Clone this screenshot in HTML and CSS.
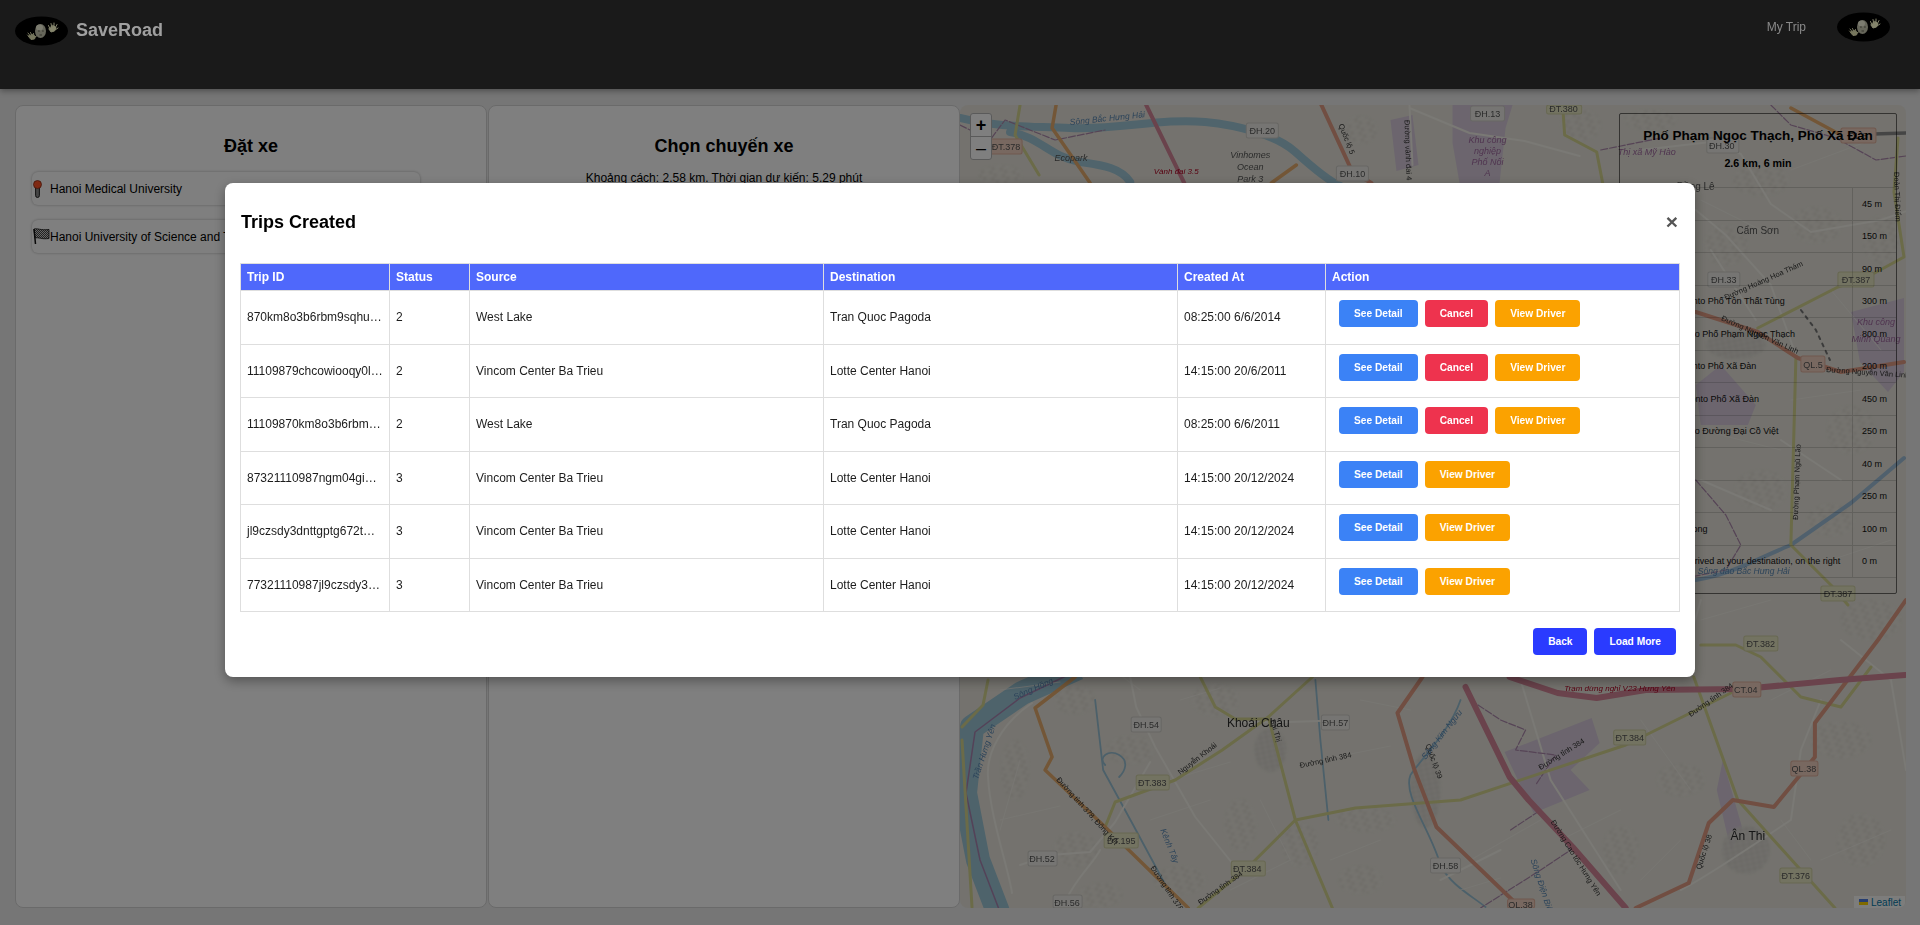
FILE: index.html
```html
<!DOCTYPE html>
<html lang="vi">
<head>
<meta charset="utf-8">
<title>SaveRoad</title>
<link rel="stylesheet" href="styles.css">
</head>
<body>
<svg class="defs" width="0" height="0" aria-hidden="true">
  <symbol id="logo" viewBox="0 0 53 30">
    <ellipse cx="26.5" cy="15" rx="26.5" ry="14.5" fill="#000"/>
    <ellipse cx="25.500" cy="15" rx="5.500" ry="7" fill="#66665a"/>
    <ellipse cx="24.500" cy="11.500" rx="3.500" ry="3" fill="#7c7c70"/>
    <path d="M23 15h1.800M27 15h1.800M24.500 19h2.500" stroke="#34342c" stroke-width="1.200"/>
    <path d="M13.500 20.500l2.500 3 3.500-.5 1-2.500-3-2zM12.500 19l2 2M13 17l2.500 3M15.500 16.500l1.500 3M18.500 17.500l.4 2.500M21.500 20l-2 1" fill="#77775e" stroke="#77775e" stroke-width="1" stroke-linecap="round"/>
    <path d="M34 13l2 3 3.500-1 1.500-3.500-3-2zM33.500 9.500l1.800 4M36 7.500l.9 4.500M39 7l0 5M42 8.500l-2 4M43 12l-3 2" fill="#85856c" stroke="#85856c" stroke-width="1" stroke-linecap="round"/>
  </symbol>
  <defs>
    <pattern id="vill" width="11" height="7" patternUnits="userSpaceOnUse" patternTransform="rotate(-18)">
      <rect width="11" height="7" fill="#e6e2d9"/>
      <path d="M0 1.500h7M3 5h7" stroke="#f6f5ef" stroke-width="1"/>
      <rect x="8" y="0" width="2" height="2" fill="#d2cfc6"/>
      <rect x="0.500" y="4" width="2" height="2" fill="#d2cfc6"/>
    </pattern>
    <pattern id="town" width="6" height="5" patternUnits="userSpaceOnUse" patternTransform="rotate(-12)">
      <rect width="6" height="5" fill="#d6d3cb"/>
      <path d="M0 1.500h6M2 0v5" stroke="#e8e7e1" stroke-width=".8"/>
    </pattern>
  </defs>
</svg>

<header class="topbar">
  <div class="brand">
    <svg class="logo" viewBox="0 0 53 30"><use href="#logo"/></svg>
    <span class="brand-name">SaveRoad</span>
  </div>
  <nav class="topnav">
    <a class="topnav-link">My Trip</a>
    <svg class="avatar" viewBox="0 0 53 30"><use href="#logo"/></svg>
  </nav>
</header>

<main class="workspace">
  <section class="panel">
    <h2 class="panel-title">Đặt xe</h2>
    <div class="place">
      <svg class="pin" viewBox="0 0 9 18"><rect x="2.600" y="5" width="3.800" height="12.500" rx="1.900" fill="#8a8a8a" stroke="#111" stroke-width=".9"/><circle cx="4.500" cy="4.500" r="4" fill="#ff5226" stroke="#7a2410" stroke-width=".7"/></svg>
      <span class="place-text">Hanoi Medical University</span>
    </div>
    <div class="place">
      <svg class="flag" viewBox="0 0 17 17">
        <defs><pattern id="check" width="2" height="2" patternUnits="userSpaceOnUse"><rect width="2" height="2" fill="#cfcfcf"/><rect width="1" height="1" fill="#444"/><rect x="1" y="1" width="1" height="1" fill="#444"/></pattern></defs>
        <path d="M1 1c4-1 6 1.500 15 .5v9c-8 1-10-1.500-14-.5z" fill="url(#check)" stroke="#111" stroke-width=".8"/>
        <path d="M1 1l1.500 15" stroke="#111" stroke-width="1.500"/>
      </svg>
      <span class="place-text">Hanoi University of Science and Technology</span>
    </div>
  </section>

  <section class="panel">
    <h2 class="panel-title">Chọn chuyến xe</h2>
    <p class="panel-note">Khoảng cách: 2.58 km. Thời gian dự kiến: 5.29 phút</p>
  </section>

  <section class="map">
    <svg class="map-art" viewBox="960 105 945 803" preserveAspectRatio="none">
      <!-- land use -->
      <path class="landuse" d="M1452 105h60l-7 23-6 55h-40l-7-40z"/>
      <path class="landuse" d="M1504 752l87-34 8 25-29 27 19 20-56 23z"/>
      <path class="landuse" d="M1850 312l53-14v74l-16 20-28-30z"/>
      <path class="landuse" d="M1695 385l25-20 35 40-8 20h-47z"/>
      <path class="landuse" d="M1722 760l20 70-12 20-14-60z"/>
      <path class="landuse" d="M1390 120l22-5 6 50-22 6z"/>
      <!-- villages -->
      <g class="villages">
        <ellipse cx="1015" cy="770" rx="14" ry="30"/>
        <ellipse cx="1075" cy="700" rx="20" ry="14"/>
        <ellipse cx="1075" cy="850" rx="22" ry="18"/>
        <ellipse cx="1130" cy="750" rx="24" ry="14"/>
        <ellipse cx="1100" cy="895" rx="22" ry="12"/>
        <ellipse cx="1215" cy="700" rx="24" ry="16"/>
        <ellipse cx="1300" cy="845" rx="18" ry="22"/>
        <ellipse cx="1240" cy="825" rx="16" ry="26"/>
        <ellipse cx="1180" cy="880" rx="26" ry="14"/>
        <ellipse cx="1365" cy="820" rx="30" ry="12"/>
        <ellipse cx="1360" cy="880" rx="22" ry="14"/>
        <ellipse cx="1620" cy="850" rx="18" ry="24"/>
        <ellipse cx="1680" cy="780" rx="24" ry="16"/>
        <ellipse cx="1840" cy="740" rx="30" ry="18"/>
        <ellipse cx="1860" cy="840" rx="24" ry="26"/>
        <ellipse cx="1870" cy="620" rx="30" ry="20"/>
        <ellipse cx="1760" cy="180" rx="28" ry="16"/>
        <ellipse cx="1815" cy="225" rx="26" ry="18"/>
        <ellipse cx="1725" cy="245" rx="22" ry="20"/>
        <ellipse cx="1850" cy="430" rx="24" ry="24"/>
        <ellipse cx="1760" cy="490" rx="26" ry="20"/>
        <ellipse cx="1830" cy="520" rx="24" ry="16"/>
        <ellipse cx="1880" cy="240" rx="18" ry="24"/>
        <ellipse cx="1580" cy="125" rx="20" ry="16"/>
        <ellipse cx="1650" cy="120" rx="26" ry="10"/>
        <ellipse cx="1360" cy="130" rx="16" ry="14"/>
        <ellipse cx="1000" cy="175" rx="22" ry="10"/>
      </g>
      <g class="towns">
        <ellipse cx="1270" cy="750" rx="16" ry="22"/>
        <ellipse cx="1425" cy="790" rx="15" ry="38"/>
        <ellipse cx="1745" cy="850" rx="24" ry="24"/>
        <ellipse cx="1735" cy="345" rx="30" ry="14"/>
      </g>
      <!-- water -->
      <path class="river-big" d="M1078 668L1022 693 972 727 965 793 978 860 998 912"/>
      <path class="river-line" d="M1070 674L1020 698 975 732 966 793 980 860 1000 912"/>
      <path class="river-mid" d="M960 118c40 10 70 8 110 10 50 2 90-10 135-6 30 3 70 12 90 30 20 18 35 30 45 34"/>
      <path class="river-mid" d="M1010 132c30 5 40 25 70 30 20 3 40 5 50 20"/>
      <path class="river-thin" d="M1790 545l60-42 53-45"/>
      <path class="river-thin" d="M1790 545c-30 12-60 30-95 35"/>
      <path class="canal" d="M1095 700l8 70 30 55 35 65M1315 680l5 60 8 80"/>
      <path class="canal" d="M1460 700c-10 30-40 60-50 75-8 20 20 55 30 90 10 20 30 30 45 42"/>
      <path class="canal" d="M1105 765c-8-8 4-16 14-10s6 16 0 22"/>
      <!-- field tracks -->
      <path class="track" d="M1000 690l60-8M1000 820l60-14M1100 660l40 30M1180 700l40-12M1170 780l60-18M1150 820l60-20M1260 800l30 60M1320 760l70-14M1330 860l50-20M1360 700l50 10M1470 860l70-40M1560 840l60-30M1640 720l50 70M1640 880l40-40M1770 700l60-30M1780 820l30 40M1820 860l70-30M1830 560l60-20M1700 620l70-20M1700 430l80 20M1790 400l70-10M1700 200l60 30M1790 170l80-30M1830 290l50 60M1460 890l40-12M1020 760l-20 70M1230 890l60-30"/>
      <path class="minor" d="M1130 677l6 30 19 40 40 70 40 50M1032 703c-30 20-46 50-44 74 2 40 20 90 24 116M1150 762l-35 60-25 30-40 3-30 10M1100 850c-8 15-24 28-34 50"/>
      <path class="minor" d="M1230 722h60l55-2M1409 105l3 60M1409 108l60 25 55 8 55 15M1640 150l70-8 30 12 30 50 40 28 70-12 40-14M1695 210l30 25 45 50 25 70"/>
      <path class="minor" d="M1840 640l50 40 15 90M1700 600l-20 70M1820 700l-20 50-10 70-30 20M1760 840c-30 20-60 40-80 50"/>
      <path class="minor" d="M1520 680l30 100 70 110M1700 480l70 30M1710 250l45 70M1780 440l60 40M1440 880l60-30"/>
      <!-- boundary -->
      <path class="bound" d="M1770 105l20 20 45 13 40 22 30-4M1600 150l60-12M1470 700l30 20 25 10-10 20 40 5-20 30M1510 830l30-20 30 40-30 20-60 38M1695 480l30 35 15 30-15 25-40 8M960 125l30 15 15-20 50 20 50-10"/>
      <path class="rail" d="M1800 310l15 20 14 30"/>
      <!-- secondary roads -->
      <path class="yellow" d="M1562 105l2 30 32 17 6 31"/>
      <path class="yellow" d="M1312 677l-44 40 27 103 37 88"/>
      <path class="yellow" d="M1268 717l-46 33-47 30-60 22-10 25"/>
      <path class="yellow" d="M1198 908l50-41 47-47 60-12 105-8 165-55 105-52"/>
      <path class="yellow" d="M1200 677l15 30 20 12 33 0"/>
      <path class="yellow" d="M988 680l-5 25-21 22M962 740l10 167M1693 677l44 123 97 108"/>
      <path class="yellow" d="M1897 138l-4 54 10 65-33 18-33 12-80 41M1795 358l-5 187 40 40 17 20"/>
      <path class="yellow" d="M1700 645l35 0 25 12 40 40 40 10 30-40"/>
      <path class="yellow" d="M1020 105l-5 30 24 40"/>
      <!-- trunk roads -->
      <path class="orange" d="M1075 677l-40 31 17 49-7 13 60 57 83 81"/>
      <path class="orange" d="M1056 105l-4 23 38 55M1296 165l-25 18"/>
      <path class="orange" d="M1790 108l50 27"/>
      <path class="steel" d="M1840 135l65-2"/>
      <path class="salmon" d="M1422 677l-25 36 17 57 22 57 83 80"/>
      <path class="salmon" d="M1635 908l53-25 20-60 24-23 41 7 41-50v-34l63-83 28-40"/>
      <path class="salmon" d="M1695 312l62 20 40 26 43 14 63-10"/>
      <path class="salmon" d="M1321 105l31 67 19 11"/>
      <path class="pink" d="M1509 677l48 16 39 5 49-8 97-1 97-9 65-5"/>
      <path class="pink" d="M1465 687l44 90 19 23 44 47 53 61"/>
      <path class="pink pink-thin" d="M1146 105l38 78"/>
      <!-- shields -->
      <g class="sh"><rect x="1470" y="106" width="34" height="15"/><text x="1487" y="117">ĐH.13</text></g>
      <g class="sh sh-y"><rect x="1546" y="105" width="35" height="9"/><text x="1563" y="112">ĐT.380</text></g>
      <g class="sh"><rect x="1246" y="123" width="32" height="15"/><text x="1262" y="134">ĐH.20</text></g>
      <g class="sh"><rect x="1336" y="166" width="32" height="15"/><text x="1352" y="177">ĐH.10</text></g>
      <g class="sh sh-o"><rect x="990" y="139" width="32" height="15"/><text x="1006" y="150">ĐT.378</text></g>
      <g class="sh"><rect x="1706" y="138" width="32" height="15"/><text x="1721" y="149">ĐH.30</text></g>
      <g class="sh sh-o"><rect x="1840" y="128" width="35" height="15"/><text x="1857" y="139">QL.5</text></g>
      <g class="sh"><rect x="1707" y="272" width="32" height="15"/><text x="1723" y="283">ĐH.33</text></g>
      <g class="sh sh-y"><rect x="1837" y="272" width="36" height="15"/><text x="1855" y="283">ĐT.387</text></g>
      <g class="sh sh-o"><rect x="1800" y="356" width="24" height="16"/><text x="1812" y="368">QL.5</text></g>
      <g class="sh sh-y"><rect x="1820" y="586" width="34" height="15"/><text x="1837" y="597">ĐT.387</text></g>
      <g class="sh sh-y"><rect x="1743" y="636" width="34" height="15"/><text x="1760" y="647">ĐT.382</text></g>
      <g class="sh sh-o"><rect x="1732" y="682" width="28" height="15"/><text x="1745" y="693">CT.04</text></g>
      <g class="sh sh-y"><rect x="1613" y="730" width="32" height="15"/><text x="1629" y="741">ĐT.384</text></g>
      <g class="sh sh-o"><rect x="1790" y="761" width="27" height="15"/><text x="1803" y="772">QL.38</text></g>
      <g class="sh sh-y"><rect x="1779" y="868" width="32" height="15"/><text x="1795" y="879">ĐT.376</text></g>
      <g class="sh"><rect x="1430" y="858" width="30" height="15"/><text x="1445" y="869">ĐH.58</text></g>
      <g class="sh"><rect x="1321" y="715" width="28" height="15"/><text x="1335" y="726">ĐH.57</text></g>
      <g class="sh sh-y"><rect x="1136" y="775" width="33" height="15"/><text x="1152" y="786">ĐT.383</text></g>
      <g class="sh sh-y"><rect x="1104" y="833" width="34" height="15"/><text x="1121" y="844">ĐT.195</text></g>
      <g class="sh"><rect x="1131" y="717" width="30" height="15"/><text x="1146" y="728">ĐH.54</text></g>
      <g class="sh"><rect x="1028" y="851" width="29" height="15"/><text x="1042" y="862">ĐH.52</text></g>
      <g class="sh"><rect x="1053" y="895" width="29" height="13"/><text x="1067" y="906">ĐH.56</text></g>
      <g class="sh sh-y"><rect x="1231" y="861" width="34" height="15"/><text x="1247" y="872">ĐT.384</text></g>
      <g class="sh sh-o"><rect x="1507" y="899" width="27" height="9"/><text x="1520" y="908">QL.38</text></g>
      <!-- labels -->
      <text class="place-label" x="1258" y="727">Khoái Châu</text>
      <text class="place-label" x="1747" y="840">Ân Thi</text>
      <text class="small-label" x="1757" y="234">Cẩm Sơn</text>
      <text class="small-label" x="1695" y="190">Đồng Lê</text>
      <text class="italic-label" x="1071" y="161">Ecopark</text>
      <text class="italic-label" x="1250" y="158">Vinhomes</text>
      <text class="italic-label" x="1250" y="170">Ocean</text>
      <text class="italic-label" x="1250" y="182">Park 3</text>
      <text class="purple-label" x="1487" y="143">Khu công</text>
      <text class="purple-label" x="1487" y="154">nghiệp</text>
      <text class="purple-label" x="1487" y="165">Phố Nối</text>
      <text class="purple-label" x="1487" y="176">A</text>
      <text class="purple-label" x="1646" y="155">Thị xã Mỹ Hào</text>
      <text class="purple-label" x="1875" y="325">Khu công</text>
      <text class="purple-label" x="1875" y="342">Minh Quang</text>
      <text class="red-label" x="1176" y="174">Vành đai 3.5</text>
      <text class="red-label" x="1619" y="691">Trạm dừng nghỉ V23 Hưng Yên</text>
      <text class="road-label" transform="translate(1338 125) rotate(68)">Quốc lộ 5</text>
      <text class="road-label" transform="translate(1404 120) rotate(88)">Đường vành đai 4 Hà Nội</text>
      <text class="road-label" transform="translate(1300 768) rotate(-12)">Đường tỉnh 384</text>
      <text class="road-label" transform="translate(1540 770) rotate(-32)">Đường tỉnh 384</text>
      <text class="road-label" transform="translate(1690 717) rotate(-35)">Đường tỉnh 384</text>
      <text class="road-label" transform="translate(1180 775) rotate(-38)">Nguyễn Khoái</text>
      <text class="road-label" transform="translate(1270 720) rotate(74)">Sài Thị</text>
      <text class="road-label" transform="translate(1056 780) rotate(48)">Đường tỉnh 378, Đông Kết</text>
      <text class="road-label" transform="translate(1150 868) rotate(56)">Đường tỉnh 378, Liêu</text>
      <text class="road-label" transform="translate(1200 905) rotate(-35)">Đường tỉnh 384</text>
      <text class="road-label" transform="translate(1550 822) rotate(58)">Đường Cao tốc Hưng Yên</text>
      <text class="road-label" transform="translate(1425 745) rotate(70)">Quốc lộ 39</text>
      <text class="road-label" transform="translate(1700 870) rotate(-72)">Quốc lộ 38</text>
      <text class="road-label" transform="translate(1725 300) rotate(-24)">Đường Hoàng Hoa Thám</text>
      <text class="road-label" transform="translate(1720 320) rotate(24)">Đường Nguyễn Văn Linh</text>
      <text class="road-label" transform="translate(1825 372) rotate(4)">Đường Nguyễn Văn Linh</text>
      <text class="road-label" transform="translate(1797 520) rotate(-88)">Đường Phạm Ngũ Lão</text>
      <text class="road-label" transform="translate(1893 172) rotate(88)">Đoàn Thị Điểm</text>
      <text class="water-label" transform="translate(1015 700) rotate(-24)">Sông Hồng</text>
      <text class="water-label" transform="translate(978 780) rotate(-72)">Trần Hưng Yên</text>
      <text class="water-label" transform="translate(1160 830) rotate(68)">Kênh Tây</text>
      <text class="water-label" transform="translate(1425 760) rotate(-52)">Sông Kim Ngưu</text>
      <text class="water-label" transform="translate(1530 860) rotate(72)">Sông Điện Biên</text>
      <text class="water-label" x="1697" y="574">Sông đào Bắc Hưng Hải</text>
      <text class="water-label" transform="translate(1070 125) rotate(-6)">Sông Bắc Hưng Hải</text>
    </svg>

    <div class="zoom-bar">
      <span class="zoom-btn">+</span>
      <span class="zoom-btn">–</span>
    </div>

    <aside class="route">
      <h3 class="route-name">Phố Phạm Ngọc Thạch, Phố Xã Đàn</h3>
      <p class="route-sum">2.6 km, 6 min</p>
      <ol class="steps">
        <li class="step"><span>Head south</span><span>45 m</span></li>
        <li class="step"><span>Turn left</span><span>150 m</span></li>
        <li class="step"><span>Turn right</span><span>90 m</span></li>
        <li class="step"><span>Turn right onto Phố Tôn Thất Tùng</span><span>300 m</span></li>
        <li class="step"><span>Turn left onto Phố Phạm Ngọc Thạch</span><span>800 m</span></li>
        <li class="step"><span>Turn right onto Phố Xã Đàn</span><span>200 m</span></li>
        <li class="step"><span>Keep right onto Phố Xã Đàn</span><span>450 m</span></li>
        <li class="step"><span>Turn left onto Đường Đại Cồ Việt</span><span>250 m</span></li>
        <li class="step"><span>Turn left</span><span>40 m</span></li>
        <li class="step"><span>Turn left</span><span>250 m</span></li>
        <li class="step"><span>Continue along</span><span>100 m</span></li>
        <li class="step"><span>You have arrived at your destination, on the right</span><span>0 m</span></li>
      </ol>
    </aside>

    <div class="attribution">
      <svg class="ua" viewBox="0 0 12 8"><rect width="12" height="4" fill="#4c7be1"/><rect y="4" width="12" height="4" fill="#ffd500"/></svg>
      <a class="attribution-link">Leaflet</a>
    </div>
  </section>
</main>

<div class="overlay">
  <div class="modal">
    <div class="modal-head">
      <h2 class="modal-title">Trips Created</h2>
      <button class="modal-close">×</button>
    </div>
    <table class="trips">
      <colgroup>
        <col class="c-id"><col class="c-status"><col class="c-source"><col class="c-dest"><col class="c-created"><col>
      </colgroup>
      <thead>
        <tr><th>Trip ID</th><th>Status</th><th>Source</th><th>Destination</th><th>Created At</th><th>Action</th></tr>
      </thead>
      <tbody>
        <tr><td>870km8o3b6rbm9sqhuhg2tnx4ld</td><td>2</td><td>West Lake</td><td>Tran Quoc Pagoda</td><td>08:25:00 6/6/2014</td>
          <td><div class="actions"><button class="btn btn-blue">See Detail</button><button class="btn btn-red">Cancel</button><button class="btn btn-amber">View Driver</button></div></td></tr>
        <tr><td>11109879chcowiooqy0lxk2mz7rt</td><td>2</td><td>Vincom Center Ba Trieu</td><td>Lotte Center Hanoi</td><td>14:15:00 20/6/2011</td>
          <td><div class="actions"><button class="btn btn-blue">See Detail</button><button class="btn btn-red">Cancel</button><button class="btn btn-amber">View Driver</button></div></td></tr>
        <tr><td>11109870km8o3b6rbm9sqhuhg2tnx</td><td>2</td><td>West Lake</td><td>Tran Quoc Pagoda</td><td>08:25:00 6/6/2011</td>
          <td><div class="actions"><button class="btn btn-blue">See Detail</button><button class="btn btn-red">Cancel</button><button class="btn btn-amber">View Driver</button></div></td></tr>
        <tr><td>87321110987ngm04gi5xk2mz7rtplq</td><td>3</td><td>Vincom Center Ba Trieu</td><td>Lotte Center Hanoi</td><td>14:15:00 20/12/2024</td>
          <td><div class="actions"><button class="btn btn-blue">See Detail</button><button class="btn btn-amber">View Driver</button></div></td></tr>
        <tr><td>jl9czsdy3dnttgptg672tmxk2mz7rtplq</td><td>3</td><td>Vincom Center Ba Trieu</td><td>Lotte Center Hanoi</td><td>14:15:00 20/12/2024</td>
          <td><div class="actions"><button class="btn btn-blue">See Detail</button><button class="btn btn-amber">View Driver</button></div></td></tr>
        <tr><td>77321110987jl9czsdy3dnttgptg672t</td><td>3</td><td>Vincom Center Ba Trieu</td><td>Lotte Center Hanoi</td><td>14:15:00 20/12/2024</td>
          <td><div class="actions"><button class="btn btn-blue">See Detail</button><button class="btn btn-amber">View Driver</button></div></td></tr>
      </tbody>
    </table>
    <div class="modal-foot">
      <button class="btn btn-indigo">Back</button>
      <button class="btn btn-indigo">Load More</button>
    </div>
  </div>
</div>
</body>
</html>
```

FILE: styles.css
```css
* { box-sizing: border-box; }

html, body { height: 100%; }

body {
  margin: 0;
  overflow: hidden;
  background: #ececec;
  color: #000;
  font-family: "Liberation Sans", Arial, sans-serif;
  font-size: 12px;
}

.defs { position: absolute; }

/* Header */
.topbar {
  position: relative;
  z-index: 20;
  height: 89px;
  display: flex;
  justify-content: space-between;
  align-items: flex-start;
  padding: 16px 30px 0 15px;
  background: #1a1a1a;
  box-shadow: 0 2px 6px rgba(0, 0, 0, .35);
}

.brand { display: flex; align-items: center; gap: 8px; }
.logo { width: 53px; height: 30px; display: block; filter: blur(.4px); }
.brand-name { color: #a0a0a0; font-size: 18px; font-weight: 700; margin-top: -1px; }

.topnav { display: flex; align-items: center; gap: 31px; margin-top: -4px; }
.topnav-link { color: #8a8a8a; font-size: 12px; }
.avatar { width: 53px; height: 30px; display: block; filter: blur(.4px); }

/* Main area */
.workspace {
  height: 836px;
  display: grid;
  grid-template-columns: 472px 472px 945px;
  column-gap: 1px;
  padding: 16px 0 17px 15px;
}

.panel {
  background: #fff;
  border: 1px solid #d5d5d5;
  border-radius: 8px;
  padding: 30px 16px 0;
}

.panel-title {
  margin: 0 0 16px;
  text-align: center;
  font-size: 18px;
  line-height: 20px;
  font-weight: 700;
}

.panel-note {
  margin: -1px 0 0;
  text-align: center;
  font-size: 12px;
  line-height: 14px;
}

.place {
  width: 388px;
  height: 33px;
  margin-bottom: 15px;
  display: flex;
  align-items: center;
  gap: 8px;
  padding-left: 1px;
  background: #fff;
  border-radius: 6px;
  box-shadow: 0 0 3px rgba(0, 0, 0, .3);
  white-space: nowrap;
  overflow: hidden;
}

.pin { width: 9px; height: 18px; flex: none; }
.flag { width: 17px; height: 17px; flex: none; margin-right: -8px; }
.place-text { font-size: 12px; }

/* Map */
.map {
  position: relative;
  overflow: hidden;
  border-radius: 8px;
  margin-left: -1px;
  background: #e8e5dc;
}

.map-art { display: block; width: 100%; height: 100%; filter: blur(.55px); }

.map-art path { fill: none; stroke-linecap: round; stroke-linejoin: round; }
.map-art .landuse { fill: #d8cbdc; stroke: none; }
.map-art .villages { fill: url(#vill); opacity: .8; filter: blur(1px); }
.map-art .towns { fill: url(#town); opacity: .85; filter: blur(1px); }
.map-art .river-big { stroke: #9cc6d6; stroke-width: 24; stroke-linecap: butt; }
.map-art .river-line { stroke: #a884b0; stroke-width: 1.500; }
.map-art .river-mid { stroke: #a0c8d8; stroke-width: 8; }
.map-art .river-thin { stroke: #a0c0da; stroke-width: 4; }
.map-art .canal { stroke: #98c0d4; stroke-width: 1.800; }
.map-art .track { stroke: #f2f0e8; stroke-width: 1; opacity: .7; }
.map-art .minor { stroke: #f4f2ea; stroke-width: 2; }
.map-art .bound { stroke: #ac88ac; stroke-width: 1.200; stroke-dasharray: 7 2; }
.map-art .rail { stroke: #777; stroke-width: 2; stroke-dasharray: 3 5; }
.map-art .yellow { stroke: #d6d690; stroke-width: 3; }
.map-art .orange { stroke: #e6ad6e; stroke-width: 3.500; }
.map-art .steel { stroke: #8a8a8a; stroke-width: 3.500; }
.map-art .salmon { stroke: #e29c84; stroke-width: 4; }
.map-art .pink { stroke: #d48698; stroke-width: 6; }
.map-art .pink-thin { stroke-width: 4; }

.map-art .sh rect { fill: #ecebe6; stroke: #cfcdc8; rx: 2px; }
.map-art .sh-y rect { fill: #e6e6c2; stroke: #d0d0a4; }
.map-art .sh-o rect { fill: #f0d0c0; stroke: #e0b09c; }
.map-art .sh text { font-size: 9px; fill: #555; text-anchor: middle; }

.map-art .place-label { font-size: 12px; fill: #2c2c2c; text-anchor: middle; }
.map-art .small-label { font-size: 10px; fill: #555; text-anchor: middle; }
.map-art .italic-label { font-size: 9px; font-style: italic; fill: #555; text-anchor: middle; }
.map-art .purple-label { font-size: 9px; font-style: italic; fill: #a06aa0; text-anchor: middle; }
.map-art .red-label { font-size: 8px; font-style: italic; fill: #b00020; text-anchor: middle; }
.map-art .road-label { font-size: 7.500px; fill: #333; }
.map-art .water-label { font-size: 8.500px; font-style: italic; fill: #5a88b4; }

.zoom-bar {
  position: absolute;
  top: 8px;
  left: 10px;
  width: 22px;
  height: 47px;
  display: flex;
  flex-direction: column;
  background: #fff;
  border: 1px solid #b5b5b5;
  border-radius: 3px;
}

.zoom-btn {
  flex: 1;
  display: flex;
  align-items: center;
  justify-content: center;
  font-size: 18px;
  font-weight: 700;
  color: #000;
}

.zoom-btn + .zoom-btn { border-top: 1px solid #b5b5b5; font-weight: 400; }

.route {
  position: absolute;
  top: 8px;
  right: 9px;
  width: 278px;
  height: 481px;
  border: 1px solid rgba(0, 0, 0, .55);
  border-radius: 2px;
  padding-top: 13px;
}

.route-name {
  margin: 0;
  text-align: center;
  font-size: 13.500px;
  line-height: 17px;
  font-weight: 700;
  color: #000;
}

.route-sum {
  margin: 13px 0 0;
  text-align: center;
  font-size: 10.700px;
  line-height: 13px;
  font-weight: 700;
}

.steps {
  list-style: none;
  margin: 17px 0 0;
  padding: 0;
  border-top: 1px solid rgba(0, 0, 0, .15);
}

.step {
  height: 32.500px;
  display: grid;
  grid-template-columns: 208px 1fr;
  align-items: center;
  padding-left: 27px;
  font-size: 9px;
  color: #111;
  border-bottom: 1px solid rgba(0, 0, 0, .15);
  white-space: nowrap;
  background: linear-gradient(rgba(0, 0, 0, .15), rgba(0, 0, 0, .15)) 232px 0 / 1px 100% no-repeat;
}

.step span:last-child { padding-left: 7px; }

.attribution {
  position: absolute;
  right: 1px;
  bottom: 0;
  height: 12px;
  display: flex;
  align-items: center;
  gap: 3px;
  padding: 0 4px 0 5px;
  background: rgba(255, 255, 255, .8);
  font-size: 10px;
}

.ua { width: 9px; height: 6px; }
.attribution-link { color: #0078a8; }

/* Modal */
.overlay {
  position: fixed;
  inset: 0;
  z-index: 10;
  display: flex;
  justify-content: center;
  align-items: flex-start;
  padding-top: 183px;
  background: rgba(0, 0, 0, .5);
}

.modal {
  width: 1470px;
  height: 494px;
  padding: 0 15px;
  background: #fff;
  border-radius: 8px;
  box-shadow: 0 4px 12px rgba(0, 0, 0, .35);
}

.modal-head {
  height: 80px;
  display: flex;
  align-items: flex-start;
  justify-content: space-between;
  padding: 29px 0 0 1px;
}

.modal-title {
  margin: 0;
  font-size: 18px;
  line-height: 21px;
  font-weight: 700;
}

.modal-close {
  border: 0;
  padding: 0;
  width: 16px;
  height: 21px;
  margin-top: -1px;
  background: none;
  color: #555;
  font-family: inherit;
  font-size: 21px;
  font-weight: 700;
  line-height: 21px;
}

.trips {
  width: 1440px;
  table-layout: fixed;
  border-collapse: collapse;
  font-size: 12px;
}

.c-id { width: 149px; }
.c-status { width: 80px; }
.c-source { width: 354px; }
.c-dest { width: 354px; }
.c-created { width: 148px; }

.trips th {
  height: 27px;
  padding: 0 6px;
  background: #4f68fb;
  color: #fff;
  font-weight: 700;
  text-align: left;
  border: 1px solid #dedede;
}

.trips th + th { border-left-color: #fff; }

.trips td {
  height: 53.500px;
  padding: 0 6px;
  color: #1c1c1c;
  border: 1px solid #dedede;
  white-space: nowrap;
  overflow: hidden;
  text-overflow: ellipsis;
}

.actions {
  display: flex;
  gap: 7px;
  margin: 0 0 7px 7px;
}

.btn {
  height: 27px;
  padding: 0 15px;
  border: 0;
  border-radius: 4px;
  color: #fff;
  font-family: inherit;
  font-size: 10.200px;
  font-weight: 700;
}

.btn-blue { background: #3b82f6; }
.btn-red { background: #ee334e; }
.btn-amber { background: #fba200; }
.btn-indigo { background: #2a3bff; }

.modal-foot {
  display: flex;
  justify-content: flex-end;
  gap: 7px;
  margin: 16px 4px 0 0;
}
```
